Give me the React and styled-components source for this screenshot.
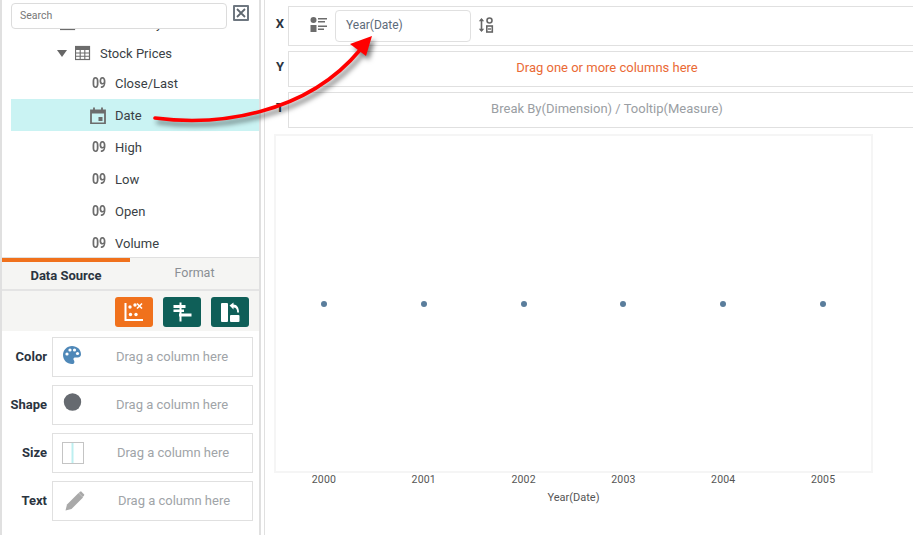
import React from 'react';
import styled, { createGlobalStyle } from 'styled-components';

const GlobalStyle = createGlobalStyle`
  html, body {
    margin: 0;
    padding: 0;
    background: #fff;
    overflow: hidden;
  }
  * { box-sizing: border-box; }
`;

const Page = styled.div`
  position: relative;
  width: 913px;
  height: 535px;
  display: flex;
  overflow: hidden;
  background: #fff;
  font-family: Roboto, "Liberation Sans", sans-serif;
  font-size: 13px;
  color: #333;
`;

const Sidebar = styled.aside`
  width: 261px;
  height: 100%;
  flex: none;
  display: flex;
  flex-direction: column;
  border-left: 2px solid #e0e0e0;
  border-right: 2px solid #e0e0e0;
`;

const SearchBar = styled.div`
  height: 29px;
  flex: none;
  display: flex;
  padding: 3px 0 0 9px;
  gap: 6px;
`;

const SearchInput = styled.div`
  width: 216px;
  height: 26px;
  border: 1px solid #dcdcdc;
  border-radius: 4px;
  padding: 0 8px 2px;
  display: flex;
  align-items: center;
  font-size: 10.5px;
  color: #777;
`;

const ClearButton = styled.div`
  width: 16px;
  height: 16px;
  margin-top: 2px;
  border: 2px solid #6e7780;
  border-radius: 1px;
  display: flex;
  align-items: center;
  justify-content: center;
`;

const Tree = styled.div`
  height: 228px;
  flex: none;
  overflow: hidden;
  display: flex;
  flex-direction: column;
  justify-content: flex-end;
  padding-left: 9px;
`;

const TreeList = styled.div`
  margin-bottom: -2px;
`;

const TreeRow = styled.div`
  height: ${(p) => p.$height || 32}px;
  display: flex;
  align-items: center;
  padding-left: ${(p) => p.$indent}px;
  background: ${(p) => (p.$active ? '#caf3f3' : 'transparent')};
  color: #3a3f45;
`;

const Caret = styled.span`
  width: 0;
  height: 0;
  margin-right: 8px;
  border-left: 5px solid transparent;
  border-right: 5px solid transparent;
  border-top: 7px solid #666;
`;

const NumType = styled.span`
  width: 24px;
  flex: none;
  font-weight: 700;
  font-size: 14px;
  color: #6c6c6c;
  padding-left: 1px;
  transform: scaleX(0.88);
  transform-origin: left center;
`;

const TypeIcon = styled.svg`
  width: 25px;
  height: 17px;
  flex: none;
`;

const GroupIcon = styled.svg`
  width: 25px;
  height: 16px;
  flex: none;
`;

const Tabs = styled.div`
  height: 34px;
  flex: none;
  display: flex;
  background: #f5f5f3;
  border-top: 1px solid #e0e0e0;
  border-bottom: 2px solid #e4e4e4;
`;

const Tab = styled.div`
  width: ${(p) => p.$width}px;
  display: flex;
  align-items: center;
  justify-content: center;
  border-top: ${(p) => (p.$active ? '4px solid #f0711c' : 'none')};
  padding-bottom: ${(p) => (p.$active ? '0' : '3px')};
  font-weight: ${(p) => (p.$active ? 700 : 400)};
  font-size: ${(p) => (p.$active ? 13 : 12.5)}px;
  color: ${(p) => (p.$active ? '#2b3440' : '#8a8f94')};
`;

const Toolbar = styled.div`
  height: 40px;
  flex: none;
  display: flex;
  justify-content: flex-end;
  align-items: center;
  gap: 10px;
  padding: 2px 10px 0 0;
  background: #f5f5f3;
`;

const ToolButton = styled.div`
  width: 38px;
  height: 30px;
  border-radius: 3px;
  background: ${(p) => p.$color};
  display: flex;
  align-items: center;
  justify-content: center;
`;

const Shelves = styled.div`
  display: flex;
  flex-direction: column;
  gap: 8px;
  padding-top: 6px;
`;

const Shelf = styled.div`
  display: flex;
  align-items: center;
`;

const ShelfLabel = styled.div`
  width: 45px;
  margin-right: 5px;
  padding-bottom: 2px;
  text-align: right;
  font-weight: 700;
  font-size: 13px;
  color: #2b3440;
`;

const ShelfBox = styled.div`
  width: 201px;
  height: 40px;
  border: 1px solid #e0e0e0;
  display: flex;
  align-items: center;
  padding-left: 9px;
`;

const ShelfIcon = styled.div`
  width: ${(p) => p.$slot}px;
  flex: none;
  display: flex;
`;

const ShelfText = styled.div`
  flex: 1;
  padding-bottom: 2px;
  text-align: center;
  color: #a0a4a8;
`;

const Main = styled.main`
  flex: 1;
  min-width: 0;
  margin-left: 3px;
  border-left: 1px solid #e0e0e0;
  overflow: hidden;
  padding-top: 6px;
`;

const Axes = styled.div`
  display: flex;
  flex-direction: column;
  gap: 5px;
`;

const AxisRow = styled.div`
  display: flex;
  align-items: center;
`;

const AxisLabel = styled.div`
  width: 23px;
  flex: none;
  padding: 0 0 6px 7px;
  text-align: center;
  font-weight: 700;
  font-size: 13px;
  color: #2b3440;
`;

const AxisBox = styled.div`
  width: 638px;
  flex: none;
  height: ${(p) => p.$height}px;
  border: 1px solid #e0e0e0;
  padding-bottom: ${(p) => (p.$center ? 4 : 0)}px;
  display: flex;
  align-items: center;
  justify-content: ${(p) => (p.$center ? 'center' : 'flex-start')};
  color: ${(p) => p.$color || '#333'};
`;

const AxisIcon = styled.svg`
  margin: 0 8px 3px 21px;
`;

const Chip = styled.div`
  width: 136px;
  height: 32px;
  border: 1px solid #e0e0e0;
  border-radius: 4px;
  padding: 0 0 2px 10px;
  display: flex;
  align-items: center;
  font-size: 12px;
  color: #5d6b7a;
`;

const SortIcon = styled.svg`
  margin: 0 0 2px 7px;
`;

const Chart = styled.div`
  width: 599px;
  margin: 6px 0 0 9px;
`;

const Plot = styled.div`
  height: 339px;
  box-shadow: inset 0 0 0 2px #f5f5f5;
  display: grid;
  grid-template-columns: repeat(6, 1fr);
  align-items: center;
  justify-items: center;
`;

const Dot = styled.span`
  width: 6px;
  height: 6px;
  border-radius: 50%;
  background: #5a7d9c;
`;

const Ticks = styled.div`
  display: grid;
  grid-template-columns: repeat(6, 1fr);
`;

const Tick = styled.div`
  text-align: center;
  font-size: 10.5px;
  line-height: 13px;
  letter-spacing: 0.2px;
  color: #555;
`;

const AxisTitle = styled.div`
  text-align: center;
  font-size: 11px;
  line-height: 13px;
  margin-top: 5px;
  color: #555;
`;

const ArrowOverlay = styled.svg`
  position: absolute;
  left: 0;
  top: 0;
  width: 913px;
  height: 535px;
  pointer-events: none;
  filter: drop-shadow(3px 4px 2.5px rgba(0, 0, 0, 0.5));
`;

const fields = ['High', 'Low', 'Open', 'Volume'];
const years = [2000, 2001, 2002, 2003, 2004, 2005];

const TableIcon = ({ color = '#6c6c6c' }) => (
  <GroupIcon viewBox="0 0 25 16" fill="none" stroke={color}>
    <rect x="0.5" y="1.5" width="14" height="13" strokeWidth="1.2" />
    <path d="M0.5 1.5h14v3h-14z" fill={color} />
    <path d="M5.2 4v10.5M9.8 4v10.5M0.5 8h14M0.5 11.2h14" strokeWidth="1.1" />
  </GroupIcon>
);

const App = () => (
  <Page>
    <GlobalStyle />
    <Sidebar>
      <SearchBar>
        <SearchInput>Search</SearchInput>
        <ClearButton>
          <svg width="10" height="10" viewBox="0 0 10 10" stroke="#5f6870" strokeWidth="1.8">
            <path d="M1 1l8 8M9 1l-8 8" />
          </svg>
        </ClearButton>
      </SearchBar>
      <Tree>
        <TreeList>
          <TreeRow $indent={49}>
            <TableIcon />
            Stock History
          </TreeRow>
          <TreeRow $indent={46} $height={28}>
            <Caret />
            <TableIcon />
            Stock Prices
          </TreeRow>
          <TreeRow $indent={80}>
            <NumType>09</NumType>
            Close/Last
          </TreeRow>
          <TreeRow $indent={79} $active>
            <TypeIcon viewBox="0 0 25 17" fill="none">
              <path d="M1 3.5h14v13h-14z" stroke="#6c6c6c" strokeWidth="1.8" />
              <path d="M1 3h14v3.5h-14z" fill="#6c6c6c" />
              <path d="M4 0.5v3M12 0.5v3" stroke="#6c6c6c" strokeWidth="1.8" />
              <rect x="8.5" y="10" width="4" height="4" fill="#6c6c6c" />
            </TypeIcon>
            Date
          </TreeRow>
          {fields.map((f) => (
            <TreeRow key={f} $indent={80}>
              <NumType>09</NumType>
              {f}
            </TreeRow>
          ))}
        </TreeList>
      </Tree>
      <Tabs>
        <Tab $active $width={128}>Data Source</Tab>
        <Tab $width={129}>Format</Tab>
      </Tabs>
      <Toolbar>
        <ToolButton $color="#f0711c">
          <svg width="20" height="20" viewBox="0 0 20 20" fill="#fff">
            <path d="M0.500 1h2v16h16.500v2H0.500z" />
            <circle cx="6" cy="5" r="1.700" />
            <circle cx="11" cy="3" r="1.700" />
            <circle cx="6.500" cy="12.500" r="1.700" />
            <circle cx="12" cy="12.500" r="1.700" />
            <path d="M13 1.500l5 5M18 1.500l-5 5" stroke="#fff" strokeWidth="1.600" />
          </svg>
        </ToolButton>
        <ToolButton $color="#0f5f58">
          <svg width="20" height="20" viewBox="0 0 20 20" fill="#fff">
            <rect x="7.500" y="0.500" width="2" height="19" />
            <rect x="1.500" y="3" width="12" height="3" />
            <rect x="1.500" y="7.500" width="10.500" height="2.500" />
            <rect x="7" y="11.500" width="12.500" height="3" />
          </svg>
        </ToolButton>
        <ToolButton $color="#0f5f58">
          <svg width="20" height="22" viewBox="0 0 20 22" fill="#fff">
            <rect x="1" y="2" width="7" height="19" rx="1" />
            <rect x="10" y="14" width="9.500" height="7" rx="1" />
            <path d="M9.500 4.500L13.500 1.500v2c3.500 0 5.500 3 5.500 8h-1.800c0-3.500-1.200-5-3.700-5v2z" />
          </svg>
        </ToolButton>
      </Toolbar>
      <Shelves>
        <Shelf>
          <ShelfLabel>Color</ShelfLabel>
          <ShelfBox>
            <ShelfIcon $slot={30}>
              <svg width="20" height="20" viewBox="0 0 20 20" style={{ marginTop: -4 }}>
                <path
                  d="M10 1C5 1 1 5 1 10s4 9 9 9c1.600 0 2.400-1 2.400-2.100 0-1.300-1-1.700-1-2.800 0-1 .8-1.600 1.900-1.600h2.200c2.400 0 3.500-1.400 3.500-3.300C19 4.600 15 1 10 1z"
                  fill="#4f88b8"
                />
                <circle cx="5" cy="9" r="1.600" fill="#fff" />
                <circle cx="8" cy="5" r="1.600" fill="#fff" />
                <circle cx="12.500" cy="5" r="1.600" fill="#fff" />
                <circle cx="15.500" cy="8.500" r="1.600" fill="#fff" />
              </svg>
            </ShelfIcon>
            <ShelfText>Drag a column here</ShelfText>
          </ShelfBox>
        </Shelf>
        <Shelf>
          <ShelfLabel>Shape</ShelfLabel>
          <ShelfBox>
            <ShelfIcon $slot={30}>
              <svg width="20" height="20" viewBox="0 0 20 20" style={{ marginTop: -6 }}>
                <circle cx="10.500" cy="10" r="8.700" fill="#666a70" />
              </svg>
            </ShelfIcon>
            <ShelfText>Drag a column here</ShelfText>
          </ShelfBox>
        </Shelf>
        <Shelf>
          <ShelfLabel>Size</ShelfLabel>
          <ShelfBox>
            <ShelfIcon $slot={32}>
              <svg width="22" height="22" viewBox="0 0 22 22" fill="none">
                <rect x="0.500" y="0.500" width="21" height="21" stroke="#c4c4c4" />
                <path d="M10.500 1v20" stroke="#bdeff0" strokeWidth="2" />
              </svg>
            </ShelfIcon>
            <ShelfText>Drag a column here</ShelfText>
          </ShelfBox>
        </Shelf>
        <Shelf>
          <ShelfLabel>Text</ShelfLabel>
          <ShelfBox>
            <ShelfIcon $slot={34}>
              <svg width="20" height="20" viewBox="0 0 20 20" fill="#a9a9a9" style={{ marginLeft: 3 }}>
                <path d="M0.500 19.500l1.500-6L13.500 2l4.500 4.500L6.500 18z" />
                <path d="M15 0.800l1-.5 3.400 3.400-.5 1-1.200 1.200-4-4z" />
              </svg>
            </ShelfIcon>
            <ShelfText>Drag a column here</ShelfText>
          </ShelfBox>
        </Shelf>
      </Shelves>
    </Sidebar>
    <Main>
      <Axes>
        <AxisRow>
          <AxisLabel>X</AxisLabel>
          <AxisBox $height={40}>
            <AxisIcon width="17" height="15" viewBox="0 0 17 15" fill="#6c6c6c">
              <circle cx="3.500" cy="3" r="3" />
              <rect x="0.500" y="8" width="6" height="7" />
              <rect x="8" y="1" width="9" height="1.500" />
              <rect x="8" y="4" width="7" height="1.500" />
              <rect x="8" y="8.500" width="9" height="1.500" />
              <rect x="8" y="11.500" width="6" height="1.500" />
            </AxisIcon>
            <Chip>Year(Date)</Chip>
            <SortIcon width="16" height="16" viewBox="0 0 16 16" fill="none" stroke="#666">
              <path d="M3.500 2v12" strokeWidth="1.600" />
              <path d="M0.800 4.300L3.500 1l2.700 3.300zM0.800 11.700L3.500 15l2.700-3.300z" fill="#666" stroke="none" />
              <ellipse cx="11.500" cy="3.500" rx="2.500" ry="2.500" strokeWidth="1.600" />
              <rect x="8.800" y="9" width="5.500" height="6" strokeWidth="1.600" />
              <path d="M10 12h3" strokeWidth="1.400" />
            </SortIcon>
          </AxisBox>
        </AxisRow>
        <AxisRow>
          <AxisLabel>Y</AxisLabel>
          <AxisBox $height={36} $center $color="#ea6a35">Drag one or more columns here</AxisBox>
        </AxisRow>
        <AxisRow>
          <AxisLabel>T</AxisLabel>
          <AxisBox $height={36} $center $color="#9a9ea3">Break By(Dimension) / Tooltip(Measure)</AxisBox>
        </AxisRow>
      </Axes>
      <Chart>
        <Plot>
          {years.map((y) => <Dot key={y} />)}
        </Plot>
        <Ticks>
          {years.map((y) => <Tick key={y}>{y}</Tick>)}
        </Ticks>
        <AxisTitle>Year(Date)</AxisTitle>
      </Chart>
    </Main>
    <ArrowOverlay viewBox="0 0 913 535" fill="none">
      <path d="M155 118C215 126 305 116 360 50" stroke="#ff0000" strokeWidth="3.600" strokeLinecap="round" />
      <path d="M372 36L350 44L366 56z" fill="#ff0000" />
    </ArrowOverlay>
  </Page>
);

export default App;
